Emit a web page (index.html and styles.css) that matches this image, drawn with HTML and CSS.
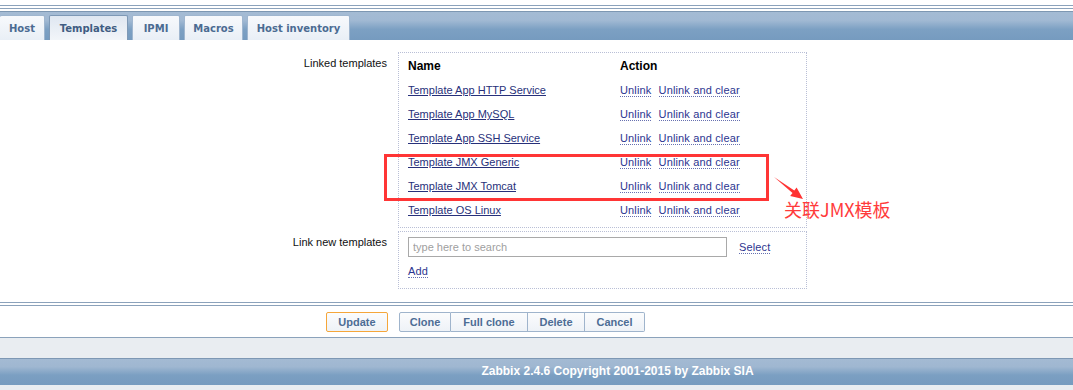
FILE: index.html
```html
<!DOCTYPE html>
<html lang="en">
<head>
    <meta charset="UTF-8">
    <title>Host configuration | Zabbix</title>
    <link rel="stylesheet" href="styles.css">
</head>
<body>
    <!-- Tabs header -->
    <div class="header">
        <div class="rules"></div>
        <div class="tabbar">
            <a href="#" class="tab tab-host">Host</a>
            <a href="#" class="tab tab-templates active">Templates</a>
            <a href="#" class="tab tab-ipmi">IPMI</a>
            <a href="#" class="tab tab-macros">Macros</a>
            <a href="#" class="tab tab-inventory">Host inventory</a>
        </div>
    </div>

    <div class="form">
        <div class="form-row">
            <div class="label">Linked templates</div>
            <div class="box linked">
                <table class="templates">
                    <tr><th class="col-name">Name</th><th>Action</th></tr>
                    <tr><td><a href="#" class="name">Template App HTTP Service</a></td><td><a href="#" class="act">Unlink</a> <a href="#" class="act">Unlink and clear</a></td></tr>
                    <tr><td><a href="#" class="name">Template App MySQL</a></td><td><a href="#" class="act">Unlink</a> <a href="#" class="act">Unlink and clear</a></td></tr>
                    <tr><td><a href="#" class="name">Template App SSH Service</a></td><td><a href="#" class="act">Unlink</a> <a href="#" class="act">Unlink and clear</a></td></tr>
                    <tr><td><a href="#" class="name">Template JMX Generic</a></td><td><a href="#" class="act">Unlink</a> <a href="#" class="act">Unlink and clear</a></td></tr>
                    <tr><td><a href="#" class="name">Template JMX Tomcat</a></td><td><a href="#" class="act">Unlink</a> <a href="#" class="act">Unlink and clear</a></td></tr>
                    <tr><td><a href="#" class="name">Template OS Linux</a></td><td><a href="#" class="act">Unlink</a> <a href="#" class="act">Unlink and clear</a></td></tr>
                </table>

                <!-- annotation -->
                <div class="mark"></div>
                <svg class="arrow" width="36" height="30" viewBox="0 0 36 30">
                    <polygon points="3,3 23.3,16.6 25.6,13.4 32,25 19.2,22 21.5,19" fill="#ff3333"/>
                </svg>
                <div class="note">关联JMX模板</div>
            </div>
        </div>

        <div class="form-row">
            <div class="label">Link new templates</div>
            <div class="box newlink">
                <div class="search-line">
                    <input type="text" class="search" placeholder="type here to search">
                    <a href="#" class="act">Select</a>
                </div>
                <div class="add-line"><a href="#" class="act">Add</a></div>
            </div>
        </div>
    </div>

    <div class="rules bottom"></div>
    <div class="buttons">
        <button class="btn btn-main">Update</button>
        <div class="btn-group">
            <button class="btn w-clone">Clone</button>
            <button class="btn w-full">Full clone</button>
            <button class="btn w-delete">Delete</button>
            <button class="btn w-cancel">Cancel</button>
        </div>
    </div>
    <div class="spacer"></div>
    <div class="copyright">Zabbix 2.4.6 Copyright 2001-2015 by Zabbix SIA</div>
</body>
</html>
```

FILE: styles.css
```css
* {
    margin: 0;
    padding: 0;
    box-sizing: border-box;
}

body {
    font-family: 'Liberation Sans', Arial, 'Noto Sans CJK SC', sans-serif;
    font-size: 11px;
    color: #000;
    background: #e9edf1;
    width: 1073px;
    height: 390px;
    overflow: hidden;
}

/* double rule lines */
.rules {
    height: 11px;
    background: #fff;
    border-top: 5px solid #fff;
    position: relative;
}

.rules::before,
.rules::after {
    content: "";
    position: absolute;
    left: 0;
    right: 0;
    height: 1px;
    background: #8ba2bb;
}

.rules::before { top: 0; }
.rules::after { top: 3px; }

.rules.bottom {
    height: 4px;
    border-top: none;
    margin-top: 0;
}

/* Tabs header */
.tabbar {
    height: 29px;
    border-top: 1px solid #7d97b2;
    background: linear-gradient(#a4bbd4 0%, #a1b9d3 30%, #7ca0c3 62%, #769bbf 100%);
    display: flex;
    align-items: flex-end;
    gap: 4px;
}

.tab {
    height: 25px;
    display: flex;
    align-items: center;
    justify-content: center;
    font-family: 'DejaVu Sans', Verdana, sans-serif;
    font-size: 10px;
    font-weight: bold;
    color: #4b6b92;
    text-decoration: none;
    background: linear-gradient(#f7f9fc, #e9eff6);
    border: 1px solid #9fb6cf;
    border-bottom: none;
    border-radius: 2px 2px 0 0;
}

.tab.active {
    background: linear-gradient(#dfe7f1, #f2f5f9);
    border-color: #7e99b6;
    color: #3f5d82;
}

.tab-host { width: 45px; border-left: none; }
.tab-templates { width: 79px; }
.tab-ipmi { width: 48px; }
.tab-macros { width: 59px; }
.tab-inventory { width: 103px; }

/* Form */
.form {
    background: #fff;
    height: 262px;
    padding-top: 12px;
}

.form-row {
    display: flex;
    gap: 11px;
    margin-bottom: 3px;
}

.label {
    width: 387px;
    text-align: right;
    padding-top: 5px;
    color: #111;
}

.box {
    width: 409px;
    border: 1px dotted #b9bfd6;
    position: relative;
}

.linked {
    height: 176px;
    padding: 1px 9px 0;
}

.templates {
    border-collapse: collapse;
}

.templates th,
.templates td {
    height: 24px;
    padding: 0;
    text-align: left;
    vertical-align: middle;
    white-space: nowrap;
}

.templates th {
    font-size: 12px;
    font-weight: bold;
}

.col-name {
    width: 212px;
}

a.name {
    color: #27307a;
    text-decoration: underline;
}

a.act {
    color: #2c3590;
    text-decoration: none;
    border-bottom: 1px dotted #6670b0;
    letter-spacing: 0.15px;
}

a.act + a.act {
    margin-left: 4px;
}

/* annotation over the list */
.mark {
    position: absolute;
    left: -15px;
    top: 101px;
    width: 385px;
    height: 47px;
    border: 3px solid #ff3535;
}

.arrow {
    position: absolute;
    left: 372px;
    top: 121px;
}

.note {
    position: absolute;
    left: 385px;
    top: 145px;
    font-family: 'Noto Sans CJK SC', sans-serif;
    font-size: 18px;
    line-height: 22px;
    color: #ff3b3b;
    white-space: nowrap;
}

.newlink {
    height: 58px;
    padding: 5px 9px 0;
}

.search-line {
    display: flex;
    align-items: center;
    gap: 12px;
}

.search {
    width: 319px;
    height: 20px;
    border: 1px solid #a9a9a9;
    padding: 0 4px;
    font-family: 'Liberation Sans', Arial, sans-serif;
    font-size: 11px;
}

.search::placeholder {
    color: #a0a0a0;
}

.add-line {
    margin-top: 6px;
    line-height: 16px;
}

/* Buttons */
.buttons {
    background: #fff;
    height: 32px;
    border-bottom: 1px solid #8ba2bb;
    display: flex;
    align-items: center;
    padding-left: 326px;
    gap: 11px;
}

.btn {
    height: 20px;
    font-family: 'Liberation Sans', Arial, sans-serif;
    font-size: 11px;
    font-weight: bold;
    color: #4d6d95;
    background: linear-gradient(#fbfcfd, #eef2f7);
    border: 1px solid #9fb4cc;
    cursor: pointer;
}

.btn-main {
    width: 62px;
    border-color: #f5a63a;
    border-radius: 2px;
}

.btn-group {
    display: flex;
}

.btn-group .btn + .btn {
    border-left: none;
}

.btn-group .btn:first-child { border-radius: 2px 0 0 2px; }
.btn-group .btn:last-child { border-radius: 0 2px 2px 0; }

.w-clone { width: 52px; }
.w-full { width: 77px; }
.w-delete { width: 57px; }
.w-cancel { width: 60px; }

.spacer {
    height: 20px;
}

.copyright {
    height: 27px;
    border-top: 1px solid #7e98b4;
    background: linear-gradient(#a3bad3 0%, #9fb7d1 30%, #7b9fc2 62%, #769bbf 100%);
    color: #fff;
    font-weight: bold;
    font-size: 12px;
    line-height: 25px;
    text-align: center;
    padding-left: 162px;
}
```
